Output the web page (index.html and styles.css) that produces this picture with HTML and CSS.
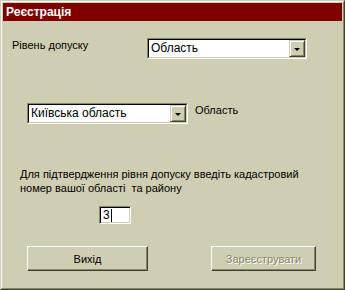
FILE: index.html
```html
<!DOCTYPE html>
<html lang="uk">
<head>
  <meta charset="UTF-8" />
  <title>Реєстрація</title>
  <link rel="stylesheet" href="styles.css">
</head>
<body>

  <div class="window">
    <div class="frame">
      <div class="titlebar">Реєстрація</div>

      <div class="content">
        <!-- Access level -->
        <div class="row row-level">
          <label class="label label-level">Рівень допуску</label>
          <div class="combo combo-level">
            <span class="combo-text">Область</span>
            <span class="combo-btn"><span class="arrow"></span></span>
          </div>
        </div>

        <!-- Region -->
        <div class="row row-region">
          <div class="combo combo-region">
            <span class="combo-text">Київська область</span>
            <span class="combo-btn"><span class="arrow"></span></span>
          </div>
          <span class="label">Область</span>
        </div>

        <p class="hint">Для підтвердження рівня допуску введіть кадастровий<br />номер вашої області &nbsp;та району</p>

        <div class="code">
          <div class="field">3<span class="caret"></span></div>
        </div>

        <div class="buttons">
          <button class="btn btn-exit">Вихід</button>
          <button class="btn btn-register" disabled>Зареєструвати</button>
        </div>
      </div>
    </div>
  </div>

</body>
</html>
```

FILE: styles.css
```css
body {
  margin: 0;
  font-family: "Liberation Sans", Arial, sans-serif;
  font-size: 11px;
  color: #000;
  background: #d0ceb2;
}
.window {
  width: 345px;
  height: 290px;
  box-sizing: border-box;
  border: 1px solid;
  border-color: #d0ceb2 #404030 #404030 #d0ceb2;
  background: #d0ceb2;
}
.frame {
  height: 100%;
  box-sizing: border-box;
  border: 1px solid;
  border-color: #fff #8a8668 #8a8668 #fff;
  padding: 1px;
}
.titlebar {
  height: 18px;
  background: #800000;
  color: #fff;
  font-weight: bold;
  font-size: 12px;
  line-height: 18px;
  padding-left: 3px;
}
.content {
  padding-left: 9px;
}
.row {
  display: flex;
  align-items: flex-start;
}
.row-level {
  margin-top: 17px;
}
.label {
  line-height: 13px;
  padding-top: 1px;
}
.label-level {
  width: 135px;
}
.combo {
  display: flex;
  box-sizing: border-box;
  height: 21px;
  background: #fff;
  border: 2px solid;
  border-color: #404030 #fff #fff #404030;
  box-shadow: inset 0 0 0 0 transparent;
  outline: 0;
  position: relative;
}
.combo::before {
  content: "";
  position: absolute;
  inset: -2px;
  border: 1px solid;
  border-color: #8a8668 #fff #fff #8a8668;
  pointer-events: none;
}
.combo::after {
  content: "";
  position: absolute;
  inset: -1px;
  border: 1px solid;
  border-color: #000 #d0ceb2 #d0ceb2 #000;
  pointer-events: none;
}
.combo-level {
  width: 160px;
}
.combo-region {
  width: 161px;
  margin-left: 15px;
  margin-right: 7px;
}
.combo-text {
  flex: 1;
  padding-left: 2px;
  line-height: 17px;
  font-size: 12px;
}
.combo-btn {
  width: 16px;
  box-sizing: border-box;
  background: #d0ceb2;
  border: 1px solid;
  border-color: #d0ceb2 #404030 #404030 #d0ceb2;
  box-shadow: inset 1px 1px 0 #fff, inset -1px -1px 0 #8a8668;
  display: flex;
  align-items: center;
  justify-content: center;
}
.arrow {
  width: 0;
  height: 0;
  border-left: 3px solid transparent;
  border-right: 3px solid transparent;
  border-top: 3px solid #000;
  margin-top: 1px;
}
.row-region {
  margin-top: 44px;
}
.hint {
  margin: 43px 0 0 8px;
  line-height: 14px;
}
.code {
  margin: 11px 0 0 87px;
}
.field {
  width: 32px;
  height: 18px;
  box-sizing: border-box;
  background: #fff;
  border: 1px solid;
  border-color: #8a8668 #fff #fff #8a8668;
  box-shadow: inset 1px 1px 0 #000, inset -1px -1px 0 #d0ceb2;
  padding-left: 3px;
  font-size: 12px;
  line-height: 16px;
  display: flex;
  align-items: center;
}
.caret {
  display: inline-block;
  width: 1px;
  height: 13px;
  background: #000;
  margin-left: 1px;
}
.buttons {
  display: flex;
  margin: 22px 0 0 15px;
}
.btn {
  height: 25px;
  box-sizing: border-box;
  font-family: "Liberation Sans", Arial, sans-serif;
  font-size: 11px;
  color: #000;
  background: #d0ceb2;
  border: 1px solid;
  border-color: #fff #404030 #404030 #fff;
  box-shadow: inset -1px -1px 0 #8a8668;
  padding: 0;
}
.btn-exit {
  width: 121px;
}
.btn-register {
  width: 105px;
  margin-left: 63px;
  color: #8a8668;
  text-shadow: 1px 1px 0 #fff;
}
```
